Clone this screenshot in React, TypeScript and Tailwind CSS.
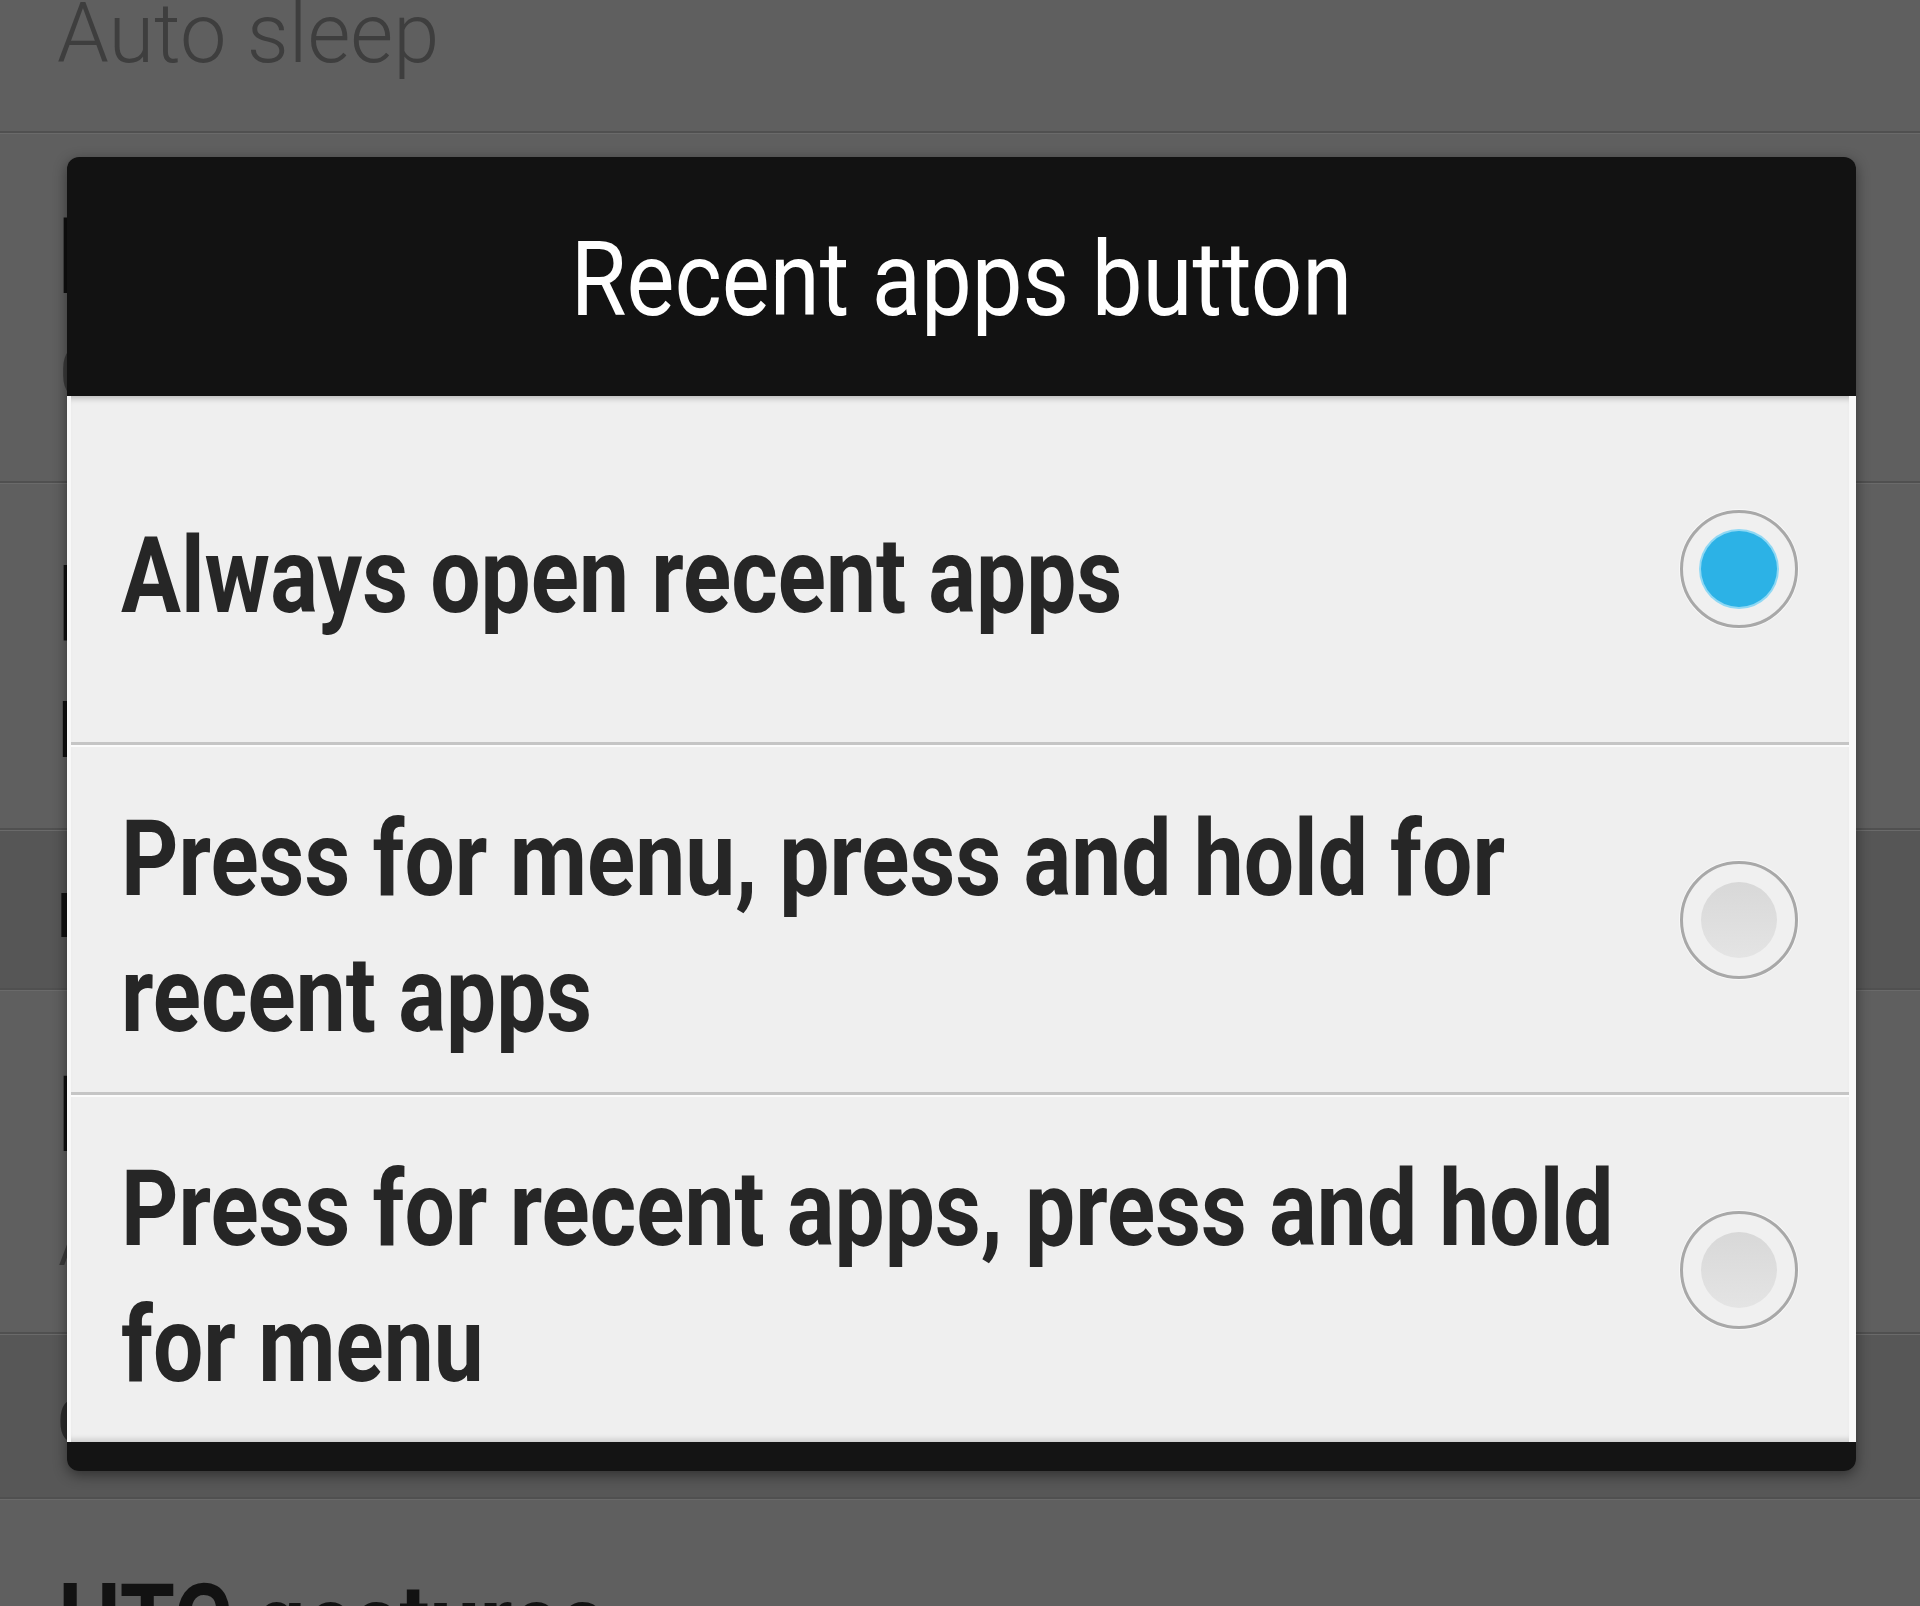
import React from "react";

const options = [
  { lines: ["Always open recent apps"], selected: true, h: "h-[346px]" },
  { lines: ["Press for menu, press and hold for", "recent apps"], selected: false, h: "h-[345px]" },
  { lines: ["Press for recent apps, press and hold", "for menu"], selected: false, h: "h-[345px]" },
];

const Line = ({ dark }: { dark?: boolean }) => (
  <div className={dark ? "bg-[#575757]" : ""}>
    <div className="h-[2px] bg-[#505050]" />
    <div className="h-px bg-[#6a6a6a]" />
  </div>
);

const Radio = ({ on }: { on: boolean }) => (
  <div className="flex h-[118px] w-[118px] shrink-0 items-center justify-center rounded-full border-[3px] border-[#a8a8a8] bg-[#f0f0f0] shadow-[0_0_0_1px_#f8f8f8]">
    {on ? (
      <div className="h-[76px] w-[76px] rounded-full bg-[#2cb2e6] shadow-[0_0_0_2px_#8fd8f4]" />
    ) : (
      <div className="h-[76px] w-[76px] rounded-full bg-gradient-to-b from-[#d8d8d8] to-[#e4e4e4]" />
    )}
  </div>
);

const App: React.FC = () => {
  return (
    <div
      className="relative h-[1606px] w-full overflow-hidden bg-[#5f5f5f]"
      style={{ fontFamily: "Roboto, 'Liberation Sans', sans-serif" }}
    >
      {/* settings list behind the dialog */}
      <div className="flex flex-col">
        <div className="h-[131px] pl-[57px]">
          <div className="-mt-[8px] text-[83px] leading-[83px] font-light text-[#3e3e3e]">Auto sleep</div>
        </div>
        <Line />
        <div className="h-[347px] pl-[58px] pt-[56px]">
          <div className="origin-left scale-x-[0.85] whitespace-nowrap text-[105px] leading-[136px] font-bold text-[#0f0f0f]">Lock screen</div>
          <div className="-mt-px text-[80px] leading-[96px] font-light text-[#3a3a3a]">Choose style</div>
        </div>
        <Line />
        <div className="h-[344px] pl-[58px] pt-[64px]">
          <div className="origin-left scale-x-[0.85] whitespace-nowrap text-[105px] leading-[116px] font-bold text-[#0f0f0f]">
            Home
            <br />
            menu
          </div>
        </div>
        <Line />
        <div className="h-[157px] bg-[#565656] pl-[58px] pt-[54px]">
          <div className="origin-left scale-x-[0.85] whitespace-nowrap text-[62px] leading-[62px] font-bold text-[#111]">Buttons</div>
        </div>
        <Line />
        <div className="h-[341px] pl-[58px] pt-[57px]">
          <div className="origin-left scale-x-[0.85] whitespace-nowrap text-[105px] leading-[136px] font-bold text-[#0f0f0f]">Power</div>
          <div className="mt-[6px] text-[80px] leading-[96px] font-light text-[#3a3a3a]">Auto</div>
        </div>
        <Line />
        <div className="h-[162px] bg-[#575757] pl-[58px] pt-[56px]">
          <div className="origin-left scale-x-[0.85] whitespace-nowrap text-[62px] leading-[62px] font-bold text-[#2a2a2a]">Gestures</div>
        </div>
        <Line />
        <div className="pl-[58px] pt-[56px]">
          <div className="origin-left scale-x-[0.85] whitespace-nowrap text-[105px] leading-[136px] font-bold text-[#121212]">HTC gestures</div>
        </div>
      </div>

      {/* dialog */}
      <div className="absolute left-[67px] top-[157px] w-[1789px] shadow-[0_4px_14px_rgba(0,0,0,0.45)] rounded-[12px]">
        <div className="h-[239px] rounded-t-[12px] bg-[#121212] pt-[10px] text-center">
          <div className="scale-x-[0.87] whitespace-nowrap text-[104px] leading-[226px] text-white">Recent apps button</div>
        </div>
        <div className="flex flex-col border-l-[4px] border-r-[7px] border-[#f8f8f8] bg-[#efefef] shadow-[inset_0_7px_6px_-5px_rgba(0,0,0,0.25),inset_0_-8px_6px_-6px_rgba(0,0,0,0.18)]">
          {options.map((o, i) => (
            <React.Fragment key={i}>
              {i > 0 && (
                <div>
                  <div className="h-[3px] bg-[#c5c5c5]" />
                  <div className="h-[2px] bg-[#fbfbfb]" />
                </div>
              )}
              <div className={`flex items-center justify-between pl-[50px] pr-[51px] ${o.h}`}>
                <div className="min-w-0 flex-1 pt-[16px]">
                  <div className="origin-left scale-x-[0.85] whitespace-nowrap text-[105px] leading-[136px] font-bold text-[#262626]">
                    {o.lines.map((l, j) => (
                      <div key={j}>{l}</div>
                    ))}
                  </div>
                </div>
                <Radio on={o.selected} />
              </div>
            </React.Fragment>
          ))}
        </div>
        <div className="h-[29px] rounded-b-[12px] bg-[#141414]" />
      </div>
    </div>
  );
};

export default App;
